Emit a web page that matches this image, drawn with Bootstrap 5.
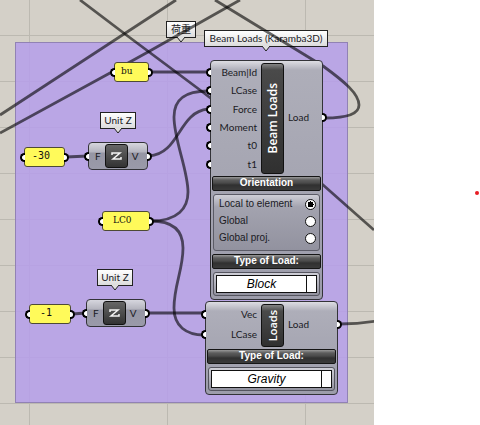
<!DOCTYPE html>
<html lang="en">
<head>
<meta charset="utf-8">
<meta name="viewport" content="width=device-width, initial-scale=1">
<title>Beam Loads definition</title>
<link href="https://cdn.jsdelivr.net/npm/bootstrap@5.3.0/dist/css/bootstrap.min.css" rel="stylesheet">
<style>
body { font-family: Lato, "Noto Sans CJK JP", sans-serif; font-size: 10px; line-height: 14px; color: #1a1a1f; background: #fff; }
.board { background-color: #d4d0c8; background-image: linear-gradient(90deg, #bcb9b1 1px, transparent 1px), linear-gradient(#bcb9b1 1px, transparent 1px); background-size: 138px 46px; background-position: 29px 35px; }
.side { flex: 0 0 106px; }
.pointer-dot { left: 101px; top: 191px; width: 4px; height: 4px; background: #e81c24; border-radius: 2px; }
.zone { left: 15px; top: 42px; width: 333px; height: 361px; background: rgba(182, 158, 234, .86); border: 1px solid #9182b4; }
.wires { left: 0; top: 0; width: 374px; height: 425px; overflow: visible; fill: none; stroke: #000; stroke-opacity: .6; stroke-width: 2.8; }
.node { position: absolute; }

.tip { background: linear-gradient(#fff, #dcdcdc); border: 1px solid #222; height: 17px; line-height: 15px; text-align: center; white-space: nowrap; }
.tip svg { position: absolute; left: calc(50% - 5px); top: 14px; fill: #dfdfdf; stroke: #222; }
.tip-main { left: 204px; top: 30px; width: 124px; }
.tip-load { left: 166px; top: 21px; width: 30px; }
.tip-z1 { left: 100px; top: 112px; width: 36px; }
.tip-z2 { left: 97px; top: 269px; width: 36px; }

.port { position: absolute; width: 5px; height: 9px; background: #fff; border: 2px solid #000; top: calc(50% - 4px); }
.port-in { left: -5px; border-right: 0; border-radius: 5px 0 0 5px; }
.port-out { right: -5px; border-left: 0; border-radius: 0 5px 5px 0; }

.note { height: 20px; background: #fffa5a; border: 1px solid #4d4a35; border-radius: 3px; font: 9px/16px "DejaVu Serif", serif; color: #111; }
.note-num { font: 10px/15px "DejaVu Sans Mono", monospace; }
.note-bu { left: 114px; top: 62px; width: 35px; padding-left: 6px; }
.note-30 { left: 24px; top: 147px; width: 41px; padding-left: 7px; }
.note-lc { left: 102px; top: 211px; width: 48px; padding-left: 10px; }
.note-1 { left: 29px; top: 304px; width: 42px; padding-left: 10px; }

.block { padding: 1px; background: linear-gradient(#dddde3, #aeaeb9 9px, #9c9caa); border: 1px solid #333338; border-radius: 4px; }
.unit { width: 60px; height: 28px; padding-left: 6px; gap: 4px; background: linear-gradient(#d6d6de, #b4b4be 9px, #9696a4 10px, #9a9aa9); }
.unit-1 { left: 88px; top: 142px; }
.unit-2 { left: 86px; top: 299px; }
.glyph { width: 23px; height: 24px; border: 1px solid #111; border-radius: 3px; background: linear-gradient(#666, #333); }
.spine { width: 23px; border: 1px solid #111; border-radius: 3px; background: linear-gradient(#858585, #4a4a4a 6px, #303030); color: #fff; }
.spine span { writing-mode: vertical-rl; transform: rotate(180deg); font: 600 12px/20px "Open Sans", sans-serif; }
.grav .spine span { font-size: 11px; }
.beam { left: 210px; top: 60px; width: 113px; }
.grav { left: 205px; top: 301px; width: 133px; }
.io { padding: 1px 0 2px; }
.beam .io { height: 114px; }
.grav .io { height: 46px; }
.ins { flex: 0 0 49px; padding: 0 4px 1px 0; }
.grav .ins { flex-basis: 54px; padding-bottom: 3px; }
.in-row, .out-row { position: relative; height: 18px; line-height: 18px; text-align: right; }
.outs { padding-bottom: 3px; }
.out-row { text-align: left; padding-left: 4px; width: 100%; }
.in-row .port { left: -6px; }
.outs .port { right: -6px; }
.band { height: 15px; border: 1px solid #151515; border-radius: 2px; background: linear-gradient(#999, #5c5c5c 3px, #4a4a4a 6px, #303030 8px, #3a3a3a); color: #fff; font: bold 10px/12px "Liberation Sans", sans-serif; text-align: center; }
.choices { margin: 3px 1px; padding: 1px 3px 3px 5px; border: 1px solid #5b5b66; border-radius: 3px; background: linear-gradient(#cfcfd7, #a3a3af 12px, #92929f); font: 10px/16px "Liberation Sans", sans-serif; }
.choice { height: 17px; }
.choice input { appearance: none; width: 11px; height: 11px; margin: 3px 0 0; border: 1px solid #111; border-radius: 6px; background: #fff; }
.choice input:checked { background: radial-gradient(circle, #000 3px, #fff 3px); }
.picker { margin: 3px 1px 2px; padding: 2px; height: 24px; border: 1px solid #55555f; border-radius: 3px; background: linear-gradient(#cfcfd7, #92929f); }
.picker select { appearance: none; min-width: 0; padding: 0; border: 1px solid #111; border-right: 0; border-radius: 0; background: #fff; color: #000; font: italic 12px/16px "Liberation Sans", sans-serif; text-align: center; text-align-last: center; }
.picker span { width: 11px; background: #fff; border: 1px solid #111; }
</style>
<script src="https://cdn.jsdelivr.net/npm/bootstrap@5.3.0/dist/js/bootstrap.bundle.min.js"></script>
</head>
<body>
<div class="d-flex min-vh-100">
  <main class="board position-relative flex-grow-1 overflow-hidden">
    <div class="node zone"></div>

    <div class="node tip tip-load">荷重<svg width="10" height="8"><path d="M1 1L5 6L9 1"/></svg></div>
    <div class="node tip tip-main">Beam Loads (Karamba3D)<svg width="10" height="8"><path d="M1 1L5 6L9 1"/></svg></div>
    <div class="node tip tip-z1">Unit Z<svg width="10" height="8"><path d="M1 1L5 6L9 1"/></svg></div>
    <div class="node tip tip-z2">Unit Z<svg width="10" height="8"><path d="M1 1L5 6L9 1"/></svg></div>

    <svg class="node wires" aria-hidden="true">
      <path d="M0 115L176 0"/>
      <path d="M0 133L110 73L148 52L240 0"/>
      <path d="M80 0L125 34L200 90L322 184L374 230"/>
      <path d="M215 0L323 66C345 82 359 94 359 105C359 114 347 118 325 118"/>
      <path d="M150 72H208"/>
      <path d="M151 221C178 221 188 208 188 192C188 170 174 140 174 117C174 100 184 91 208 91"/>
      <path d="M151 221C175 221 183 232 183 248C183 270 174 285 174 308C174 326 186 335 204 335"/>
      <path d="M149 156C180 154 178 112 208 109"/>
      <path d="M66 157L88 156"/>
      <path d="M72 314L86 313"/>
      <path d="M147 313H204"/>
      <path d="M340 324Q358 324 376 321"/>
    </svg>

    <div class="node note note-bu">bu<i class="port port-in"></i><i class="port port-out"></i></div>
    <div class="node note note-num note-30">-30<i class="port port-in"></i><i class="port port-out"></i></div>
    <div class="node note note-lc">LC0<i class="port port-in"></i><i class="port port-out"></i></div>
    <div class="node note note-num note-1">-1<i class="port port-in"></i><i class="port port-out"></i></div>

    <div class="node block unit unit-1 d-flex align-items-center">
      <i class="port port-in"></i><span>F</span>
      <span class="glyph d-flex align-items-center justify-content-center"><svg width="13" height="13" fill="none" stroke="#f4f4f4" stroke-width="1.5"><path d="M2 5V3H10L3 9H11V7"/></svg></span>
      <span>V</span><i class="port port-out"></i>
    </div>
    <div class="node block unit unit-2 d-flex align-items-center">
      <i class="port port-in"></i><span>F</span>
      <span class="glyph d-flex align-items-center justify-content-center"><svg width="13" height="13" fill="none" stroke="#f4f4f4" stroke-width="1.5"><path d="M2 5V3H10L3 9H11V7"/></svg></span>
      <span>V</span><i class="port port-out"></i>
    </div>

    <section class="node block beam">
      <div class="io d-flex">
        <div class="ins d-flex flex-column justify-content-around">
          <div class="in-row"><i class="port port-in"></i>Beam|Id</div>
          <div class="in-row"><i class="port port-in"></i>LCase</div>
          <div class="in-row"><i class="port port-in"></i>Force</div>
          <div class="in-row"><i class="port port-in"></i>Moment</div>
          <div class="in-row"><i class="port port-in"></i>t0</div>
          <div class="in-row"><i class="port port-in"></i>t1</div>
        </div>
        <div class="spine d-flex align-items-center justify-content-center"><span>Beam Loads</span></div>
        <div class="outs flex-grow-1 d-flex align-items-center"><div class="out-row"><i class="port port-out"></i>Load</div></div>
      </div>
      <div class="band">Orientation</div>
      <div class="choices">
        <div class="choice d-flex justify-content-between"><label for="o1">Local to element</label><input type="radio" name="orient" id="o1" checked></div>
        <div class="choice d-flex justify-content-between"><label for="o2">Global</label><input type="radio" name="orient" id="o2"></div>
        <div class="choice d-flex justify-content-between"><label for="o3">Global proj.</label><input type="radio" name="orient" id="o3"></div>
      </div>
      <label class="band d-block" for="type1">Type of Load:</label>
      <div class="picker d-flex"><select class="flex-grow-1" id="type1"><option>Block</option></select><span></span></div>
    </section>

    <section class="node block grav">
      <div class="io d-flex">
        <div class="ins d-flex flex-column justify-content-around">
          <div class="in-row"><i class="port port-in"></i>Vec</div>
          <div class="in-row"><i class="port port-in"></i>LCase</div>
        </div>
        <div class="spine d-flex align-items-center justify-content-center"><span>Loads</span></div>
        <div class="outs flex-grow-1 d-flex align-items-center"><div class="out-row"><i class="port port-out"></i>Load</div></div>
      </div>
      <label class="band d-block" for="type2">Type of Load:</label>
      <div class="picker d-flex"><select class="flex-grow-1" id="type2"><option>Gravity</option></select><span></span></div>
    </section>
  </main>
  <aside class="side position-relative"><div class="node pointer-dot"></div></aside>
</div>
</body>
</html>
